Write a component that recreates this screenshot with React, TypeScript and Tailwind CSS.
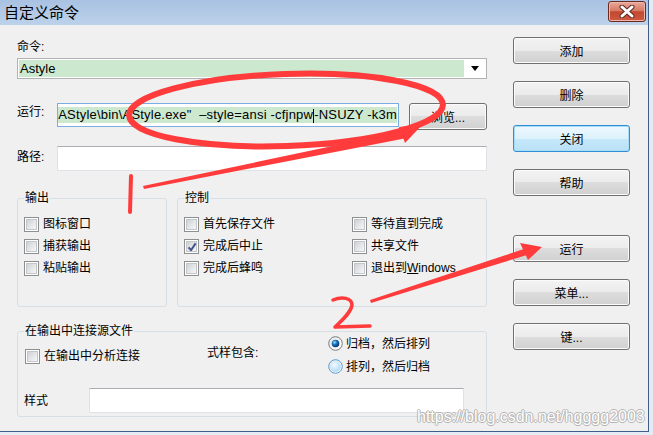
import React from 'react';

const FONT = 'font-[Liberation_Sans,Noto_Sans_CJK_SC,sans-serif]';

const CheckBox = ({ checked = false }: { checked?: boolean }) => (
  <span className="relative flex h-[15px] w-[15px] shrink-0 border border-[#8e8f8f] bg-white p-[1px]">
    <span className="flex-1 border border-[#c3c6cb] bg-[linear-gradient(135deg,#cfd2d6,#f7f7f7)]" />
    {checked && (
      <svg className="absolute left-[1px] top-[1px]" width="12" height="12" viewBox="0 0 12 12">
        <path d="M2.6 6.4 L5 9.2 L9.6 2.4" fill="none" stroke="#40528c" strokeWidth="2" strokeLinejoin="round" />
      </svg>
    )}
  </span>
);

const CheckRow = ({ label, checked }: { label: React.ReactNode; checked?: boolean }) => (
  <div className="flex h-[22px] items-center gap-[4px]">
    <CheckBox checked={checked} />
    <span className="leading-[14px]">{label}</span>
  </div>
);

const Radio = ({ selected }: { selected: boolean }) => (
  <svg width="15" height="15" viewBox="0 0 15 15" className="shrink-0">
    <defs>
      <linearGradient id={selected ? 'rs' : 'ru'} x1="0" y1="0" x2="1" y2="1">
        <stop offset="0" stopColor="#e6e6e6" />
        <stop offset="1" stopColor="#ffffff" />
      </linearGradient>
      <radialGradient id="dotOn" cx="0.38" cy="0.35" r="0.7">
        <stop offset="0" stopColor="#8fe0ff" />
        <stop offset="0.45" stopColor="#1a6fb8" />
        <stop offset="1" stopColor="#0a2d5c" />
      </radialGradient>
      <radialGradient id="dotOff" cx="0.4" cy="0.35" r="0.75">
        <stop offset="0" stopColor="#f4fbff" />
        <stop offset="1" stopColor="#a6d6f3" />
      </radialGradient>
    </defs>
    <circle cx="7.5" cy="7.5" r="6.8" fill={`url(#${selected ? 'rs' : 'ru'})`} stroke={selected ? '#7a7c80' : '#5c9bd1'} strokeWidth="1" />
    {selected ? (
      <circle cx="7.5" cy="7.5" r="3.8" fill="url(#dotOn)" />
    ) : (
      <circle cx="7.5" cy="7.5" r="5.4" fill="url(#dotOff)" />
    )}
  </svg>
);

const Btn = ({ label, primary = false, className = '' }: { label: string; primary?: boolean; className?: string }) => (
  <button
    className={`${className} flex h-[27px] w-[117px] items-center justify-center rounded-[3px] border pt-[2px] text-[12px] leading-[14px] text-black ${
      primary
        ? 'border-[#2f8fd6] bg-[linear-gradient(#eef8fe,#dcf1fc_50%,#c6e8fa_50%,#b9e1f7)] shadow-[inset_0_0_0_1px_#a9dcf7]'
        : 'border-[#707070] bg-[linear-gradient(#f3f3f3,#ebebeb_50%,#dddddd_50%,#d0d0d0)] shadow-[inset_0_0_0_1px_#fbfbfb]'
    }`}
  >
    {label}
  </button>
);

const Annotations = () => (
  <svg className="pointer-events-none absolute left-0 top-0" width="653" height="435" viewBox="0 0 653 435">
    <g fill="none" stroke="#ff3b3b" strokeLinecap="round" strokeLinejoin="round">
      <ellipse cx="286" cy="110" rx="157" ry="36" transform="rotate(-2 286 110)" strokeWidth="6" />
      <path d="M131 176 L130 212" strokeWidth="4" />
      <path d="M333 300 C342 296 352 298 352 305 C351 313 341 321 335 327 L370 326" strokeWidth="3.5" />
    </g>
    <g fill="#ff3b3b">
      <polygon points="143,186 144,189 407,138 404,131" />
      <polygon points="423,124 399,127 405,143" />
      <polygon points="370,300 371,303 527,255 524,249" />
      <polygon points="542,247 520,243 528,260" />
    </g>
  </svg>
);

export default function App() {
  return (
    <div className={`relative h-[435px] w-[653px] overflow-hidden bg-[#e4ebf4] text-[12px] text-black ${FONT}`}>
      <div className="flex h-[432px] w-[649px] flex-col border-b border-r border-[#3f5f8a] bg-[#f0f0f0]">
        {/* Title bar */}
        <div className="flex h-[25px] shrink-0 items-start justify-between bg-[linear-gradient(#a9c2e1,#bcd2eb)] pr-[2px]">
          <span className="pl-[4px] text-[15px] leading-[25px]">自定义命令</span>
          <div className="mt-[1px] flex h-[21px] w-[38px] items-center justify-center rounded-[3px] border border-[#6b2a20] bg-[linear-gradient(#e9aa9c,#d77a66_45%,#c4472f_52%,#cd5a42)] shadow-[inset_0_0_0_1px_#eeb7aa]">
            <svg width="16" height="13" viewBox="0 0 16 13">
              <path d="M3 2 L13 11 M13 2 L3 11" stroke="#5e2a22" strokeWidth="5" strokeLinecap="round" />
              <path d="M3 2 L13 11 M13 2 L3 11" stroke="#ffffff" strokeWidth="3" strokeLinecap="round" />
            </svg>
          </div>
        </div>

        {/* Body */}
        <div className="flex flex-1">
          <div className="ml-[17px] flex w-[470px] flex-col">
            <div className="mt-[15px] h-[14px] leading-[14px]">命令:</div>
            <div className="mt-[4px] flex h-[21px] border border-[#b2b2b2] bg-white p-[1px]">
              <div className="flex flex-1 items-center bg-[#cce8cf] pl-[1px] text-[13px] leading-[17px]">Astyle</div>
              <div className="flex w-[21px] items-center justify-center">
                <svg width="8" height="5" viewBox="0 0 8 5">
                  <path d="M0 0 H8 L4 5 Z" fill="#000" />
                </svg>
              </div>
            </div>

            <div className="mt-[24px] flex h-[27px] items-start">
              <span className="mt-[2px] w-[40px] leading-[14px]">运行:</span>
              <div className="flex h-[24px] w-[342px] items-center justify-end overflow-hidden border border-[#7aaee2] bg-white px-[1px]">
                <span className="whitespace-pre bg-[#cce8cf] text-[13px] leading-[16px] tracking-[0.2px]">
                  {'AStyle\\bin\\AStyle.exe"  –style=ansi -cfjnpw'}
                  <span className="inline-block h-[14px] w-px bg-black align-middle" />
                  {'-NSUZY -k3m'}
                </span>
              </div>
              <Btn label="浏览..." className="ml-[10px] !w-[78px]" />
            </div>

            <div className="mt-[16px] flex items-start">
              <span className="mt-[4px] w-[40px] leading-[14px]">路径:</span>
              <div className="h-[25px] flex-1 border border-[#dfe3e8] border-t-[#abadb3] bg-white" />
            </div>

            <div className="mt-[20px] flex gap-[10px]">
              <fieldset className="h-[116px] w-[150px] rounded-[3px] border border-[#d5dfe5]">
                <legend className="ml-[6px] px-[1px] leading-[14px]">输出</legend>
                <div className="pl-[6px] pt-[8px]">
                  <CheckRow label="图标窗口" />
                  <CheckRow label="捕获输出" />
                  <CheckRow label="粘贴输出" />
                </div>
              </fieldset>
              <fieldset className="h-[116px] w-[310px] rounded-[3px] border border-[#d5dfe5]">
                <legend className="ml-[6px] px-[1px] leading-[14px]">控制</legend>
                <div className="grid grid-cols-[168px_1fr] pl-[6px] pt-[8px]">
                  <CheckRow label="首先保存文件" />
                  <CheckRow label="等待直到完成" />
                  <CheckRow label="完成后中止" checked />
                  <CheckRow label="共享文件" />
                  <CheckRow label="完成后蜂鸣" />
                  <CheckRow
                    label={
                      <>
                        退出到<u>W</u>indows
                      </>
                    }
                  />
                </div>
              </fieldset>
            </div>

            <fieldset className="mt-[18px] h-[92px] w-[470px] rounded-[3px] border border-[#d5dfe5]">
              <legend className="ml-[6px] px-[1px] leading-[12px]">在输出中连接源文件</legend>
              <div className="flex h-[40px] pl-[7px]">
                <div className="mt-[8px] w-[182px]">
                  <CheckRow label="在输出中分析连接" />
                </div>
                <div className="mt-[9px] w-[121px] leading-[14px]">式样包含:</div>
                <div className="-mt-[1px] flex flex-col gap-[8px]">
                  <div className="flex h-[15px] items-center gap-[3px]">
                    <Radio selected />
                    <span className="leading-[14px]">归档，然后排列</span>
                  </div>
                  <div className="flex h-[15px] items-center gap-[3px]">
                    <Radio selected={false} />
                    <span className="leading-[14px]">排列，然后归档</span>
                  </div>
                </div>
              </div>
              <div className="mt-[11px] flex items-center pl-[6px]">
                <span className="w-[65px] leading-[14px]">样式</span>
                <div className="h-[25px] w-[375px] border border-[#dfe3e8] border-t-[#abadb3] bg-white" />
              </div>
            </fieldset>
          </div>

          <div className="ml-[26px] flex flex-col gap-[17px] pt-[12px]">
            <Btn label="添加" />
            <Btn label="删除" />
            <Btn label="关闭" primary />
            <Btn label="帮助" />
            <Btn label="运行" className="mt-[22px]" />
            <Btn label="菜单..." />
            <Btn label="键..." />
          </div>
        </div>
      </div>

      <Annotations />

      <div className="pointer-events-none absolute left-[417px] top-[406px] font-[Liberation_Sans,sans-serif] text-[16px] leading-[22px] text-white [text-shadow:1px_0_0_#b4b4b4,-1px_0_0_#b4b4b4,0_1px_0_#b4b4b4,0_-1px_0_#b4b4b4]">
        https://blog.csdn.net/hgggg2003
      </div>
    </div>
  );
}
